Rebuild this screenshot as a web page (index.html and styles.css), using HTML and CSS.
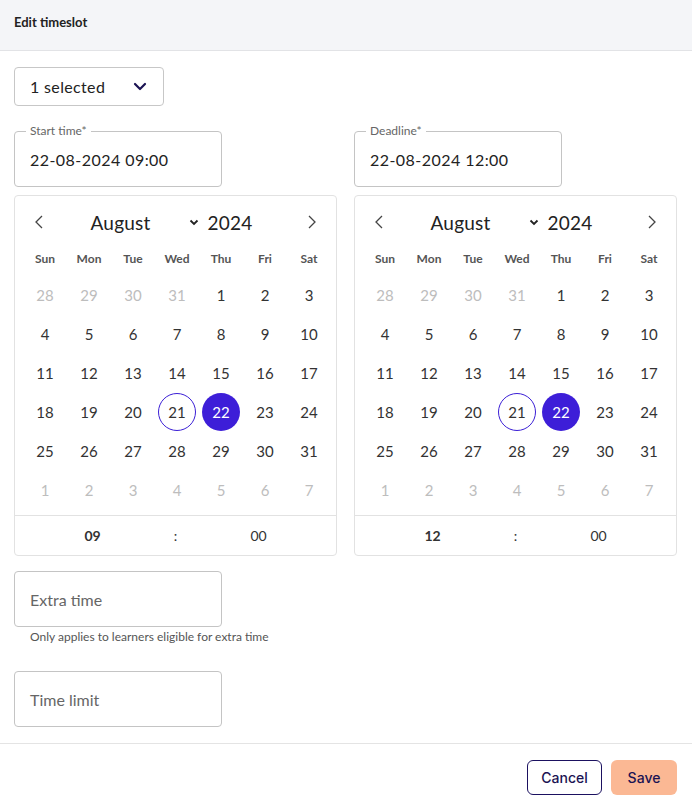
FILE: index.html
```html
<!DOCTYPE html>
<html lang="en">
<head>
<meta charset="utf-8">
<title>Edit timeslot</title>
<link rel="stylesheet" href="styles.css">
</head>
<body>
<div class="dialog">
  <header class="dlg-header">Edit timeslot</header>
  <main class="dlg-body">
    <div class="select-box">
      <span>1 selected</span>
      <svg class="sel-chev" width="14" height="9" viewBox="0 0 14 9"><path d="M2 2l5 5 5-5" fill="none" stroke="#1b1353" stroke-width="2.2" stroke-linecap="round" stroke-linejoin="round"/></svg>
    </div>

    <div class="pickers">
      <section class="picker">
        <div class="field filled">
          <span class="field-label">Start time*</span>
          <span class="field-value">22-08-2024 09:00</span>
        </div>
        <div class="calendar">
          <div class="cal-head">
            <span class="nav"><svg width="10" height="16" viewBox="0 0 10 16"><path d="M8 2L2 8l6 6" fill="none" stroke="#444" stroke-width="1.3"/></svg></span>
            <div class="cal-title">
              <span class="month">August<svg class="mchev" width="10" height="7" viewBox="0 0 10 7"><path d="M1.5 1.5L5 5l3.5-3.5" fill="none" stroke="#222" stroke-width="1.8"/></svg></span>
              <span class="year">2024</span>
            </div>
            <span class="nav"><svg width="10" height="16" viewBox="0 0 10 16"><path d="M2 2l6 6-6 6" fill="none" stroke="#444" stroke-width="1.3"/></svg></span>
          </div>
          <div class="cal-grid">
            <span class="wd">Sun</span><span class="wd">Mon</span><span class="wd">Tue</span><span class="wd">Wed</span><span class="wd">Thu</span><span class="wd">Fri</span><span class="wd">Sat</span>
            <span class="d out">28</span><span class="d out">29</span><span class="d out">30</span><span class="d out">31</span><span class="d">1</span><span class="d">2</span><span class="d">3</span>
            <span class="d">4</span><span class="d">5</span><span class="d">6</span><span class="d">7</span><span class="d">8</span><span class="d">9</span><span class="d">10</span>
            <span class="d">11</span><span class="d">12</span><span class="d">13</span><span class="d">14</span><span class="d">15</span><span class="d">16</span><span class="d">17</span>
            <span class="d">18</span><span class="d">19</span><span class="d">20</span><span class="d"><span class="circle today">21</span></span><span class="d"><span class="circle sel">22</span></span><span class="d">23</span><span class="d">24</span>
            <span class="d">25</span><span class="d">26</span><span class="d">27</span><span class="d">28</span><span class="d">29</span><span class="d">30</span><span class="d">31</span>
            <span class="d out">1</span><span class="d out">2</span><span class="d out">3</span><span class="d out">4</span><span class="d out">5</span><span class="d out">6</span><span class="d out">7</span>
          </div>
          <div class="cal-time">
            <span class="hh">09</span><span class="colon">:</span><span class="mm">00</span>
          </div>
        </div>
      </section>

      <section class="picker">
        <div class="field filled">
          <span class="field-label">Deadline*</span>
          <span class="field-value">22-08-2024 12:00</span>
        </div>
        <div class="calendar">
          <div class="cal-head">
            <span class="nav"><svg width="10" height="16" viewBox="0 0 10 16"><path d="M8 2L2 8l6 6" fill="none" stroke="#444" stroke-width="1.3"/></svg></span>
            <div class="cal-title">
              <span class="month">August<svg class="mchev" width="10" height="7" viewBox="0 0 10 7"><path d="M1.5 1.5L5 5l3.5-3.5" fill="none" stroke="#222" stroke-width="1.8"/></svg></span>
              <span class="year">2024</span>
            </div>
            <span class="nav"><svg width="10" height="16" viewBox="0 0 10 16"><path d="M2 2l6 6-6 6" fill="none" stroke="#444" stroke-width="1.3"/></svg></span>
          </div>
          <div class="cal-grid">
            <span class="wd">Sun</span><span class="wd">Mon</span><span class="wd">Tue</span><span class="wd">Wed</span><span class="wd">Thu</span><span class="wd">Fri</span><span class="wd">Sat</span>
            <span class="d out">28</span><span class="d out">29</span><span class="d out">30</span><span class="d out">31</span><span class="d">1</span><span class="d">2</span><span class="d">3</span>
            <span class="d">4</span><span class="d">5</span><span class="d">6</span><span class="d">7</span><span class="d">8</span><span class="d">9</span><span class="d">10</span>
            <span class="d">11</span><span class="d">12</span><span class="d">13</span><span class="d">14</span><span class="d">15</span><span class="d">16</span><span class="d">17</span>
            <span class="d">18</span><span class="d">19</span><span class="d">20</span><span class="d"><span class="circle today">21</span></span><span class="d"><span class="circle sel">22</span></span><span class="d">23</span><span class="d">24</span>
            <span class="d">25</span><span class="d">26</span><span class="d">27</span><span class="d">28</span><span class="d">29</span><span class="d">30</span><span class="d">31</span>
            <span class="d out">1</span><span class="d out">2</span><span class="d out">3</span><span class="d out">4</span><span class="d out">5</span><span class="d out">6</span><span class="d out">7</span>
          </div>
          <div class="cal-time">
            <span class="hh">12</span><span class="colon">:</span><span class="mm">00</span>
          </div>
        </div>
      </section>
    </div>

    <div class="field extra">
      <span class="placeholder">Extra time</span>
    </div>
    <p class="helper">Only applies to learners eligible for extra time</p>

    <div class="field limit">
      <span class="placeholder">Time limit</span>
    </div>
  </main>
  <footer class="dlg-footer">
    <button class="btn btn-cancel" type="button">Cancel</button>
    <button class="btn btn-save" type="button">Save</button>
  </footer>
</div>
</body>
</html>
```

FILE: styles.css
```css
* { box-sizing: border-box; }

html, body {
  margin: 0;
  padding: 0;
  background: #fff;
}

body {
  font-family: "Lato", "Noto Sans", "DejaVu Sans", sans-serif;
  color: #222;
}

.dialog {
  width: 692px;
  min-height: 810px;
  display: flex;
  flex-direction: column;
}

.dlg-header {
  height: 51px;
  background: #f4f5f8;
  border-bottom: 1px solid #e2e3e6;
  display: flex;
  align-items: center;
  padding: 0 14px 6px;
  font-size: 13px;
  font-weight: 700;
  color: #222;
}

.dlg-body {
  padding: 16px 15px 16px 14px;
  border-bottom: 1px solid #e4e4e4;
}

.select-box {
  width: 150px;
  height: 39px;
  border: 1px solid #c7c7c7;
  border-radius: 4px;
  display: flex;
  align-items: center;
  justify-content: space-between;
  padding: 0 16px 0 15px;
  font-size: 16px;
  letter-spacing: 0.35px;
  color: #222;
}

.sel-chev { display: block; }

.pickers {
  display: flex;
  gap: 17px;
  margin-top: 25px;
}

.picker {
  width: 323px;
}

.field {
  position: relative;
  width: 208px;
  height: 56px;
  border: 1px solid #c4c4c4;
  border-radius: 4px;
  display: flex;
  align-items: center;
  padding: 0 15px;
  font-size: 16px;
}

.field-label {
  position: absolute;
  left: 11px;
  top: -8px;
  padding: 0 4px;
  background: #fff;
  font-size: 12px;
  line-height: 14px;
  color: #666;
}

.field-value {
  color: #222;
  letter-spacing: 0.45px;
}

.calendar {
  margin-top: 8px;
  width: 323px;
  border: 1px solid #e2e2e2;
  border-radius: 4px;
  padding-top: 6px;
}

.cal-head {
  height: 40px;
  display: flex;
  align-items: center;
  padding: 0 8px;
}

.nav {
  width: 32px;
  height: 32px;
  display: flex;
  align-items: center;
  justify-content: center;
}

.nav svg { display: block; }

.cal-title {
  flex: 1;
  display: flex;
  align-items: center;
  justify-content: center;
  gap: 9px;
  padding-right: 8px;
  font-size: 19px;
  letter-spacing: 0.2px;
  color: #222;
}

.month {
  width: 108px;
  display: flex;
  align-items: center;
  justify-content: space-between;
}

.mchev { display: block; }

.cal-grid {
  display: grid;
  grid-template-columns: repeat(7, 44px);
  grid-auto-rows: 39px;
  grid-template-rows: 33px;
  padding: 0 8px 6px;
}

.wd {
  display: flex;
  align-items: center;
  justify-content: center;
  font-size: 12px;
  font-weight: 700;
  color: #555;
}

.d {
  display: flex;
  align-items: center;
  justify-content: center;
  font-size: 15px;
  color: #333;
}

.d.out { color: #bdbdbd; }

.circle {
  width: 38px;
  height: 38px;
  border-radius: 50%;
  display: flex;
  align-items: center;
  justify-content: center;
}

.circle.today {
  border: 1px solid #3b1fd6;
  color: #333;
}

.circle.sel {
  background: #3d1ed8;
  color: #fff;
}

.cal-time {
  height: 40px;
  border-top: 1px solid #e2e2e2;
  display: flex;
  justify-content: center;
  align-items: center;
  font-size: 14px;
  color: #333;
}

.cal-time span {
  width: 83px;
  text-align: center;
}

.cal-time .hh { font-weight: 700; }

.field.extra { margin-top: 15px; }

.placeholder { color: #666; }

.helper {
  margin: 3px 0 0 16px;
  font-size: 12px;
  line-height: 14px;
  color: #555;
}

.field.limit { margin-top: 27px; }

.dlg-footer {
  display: flex;
  justify-content: flex-end;
  gap: 9px;
  padding: 16px 15px 15px;
}

.btn {
  height: 35px;
  border-radius: 6px;
  font-family: "Inter", "Lato", sans-serif;
  font-size: 14px;
  font-weight: 500;
  color: #1b1353;
  cursor: pointer;
}

.btn-cancel {
  width: 75px;
  background: #fff;
  border: 1px solid #1b1160;
}

.btn-save {
  width: 66px;
  background: #fbb894;
  border: none;
}
```
